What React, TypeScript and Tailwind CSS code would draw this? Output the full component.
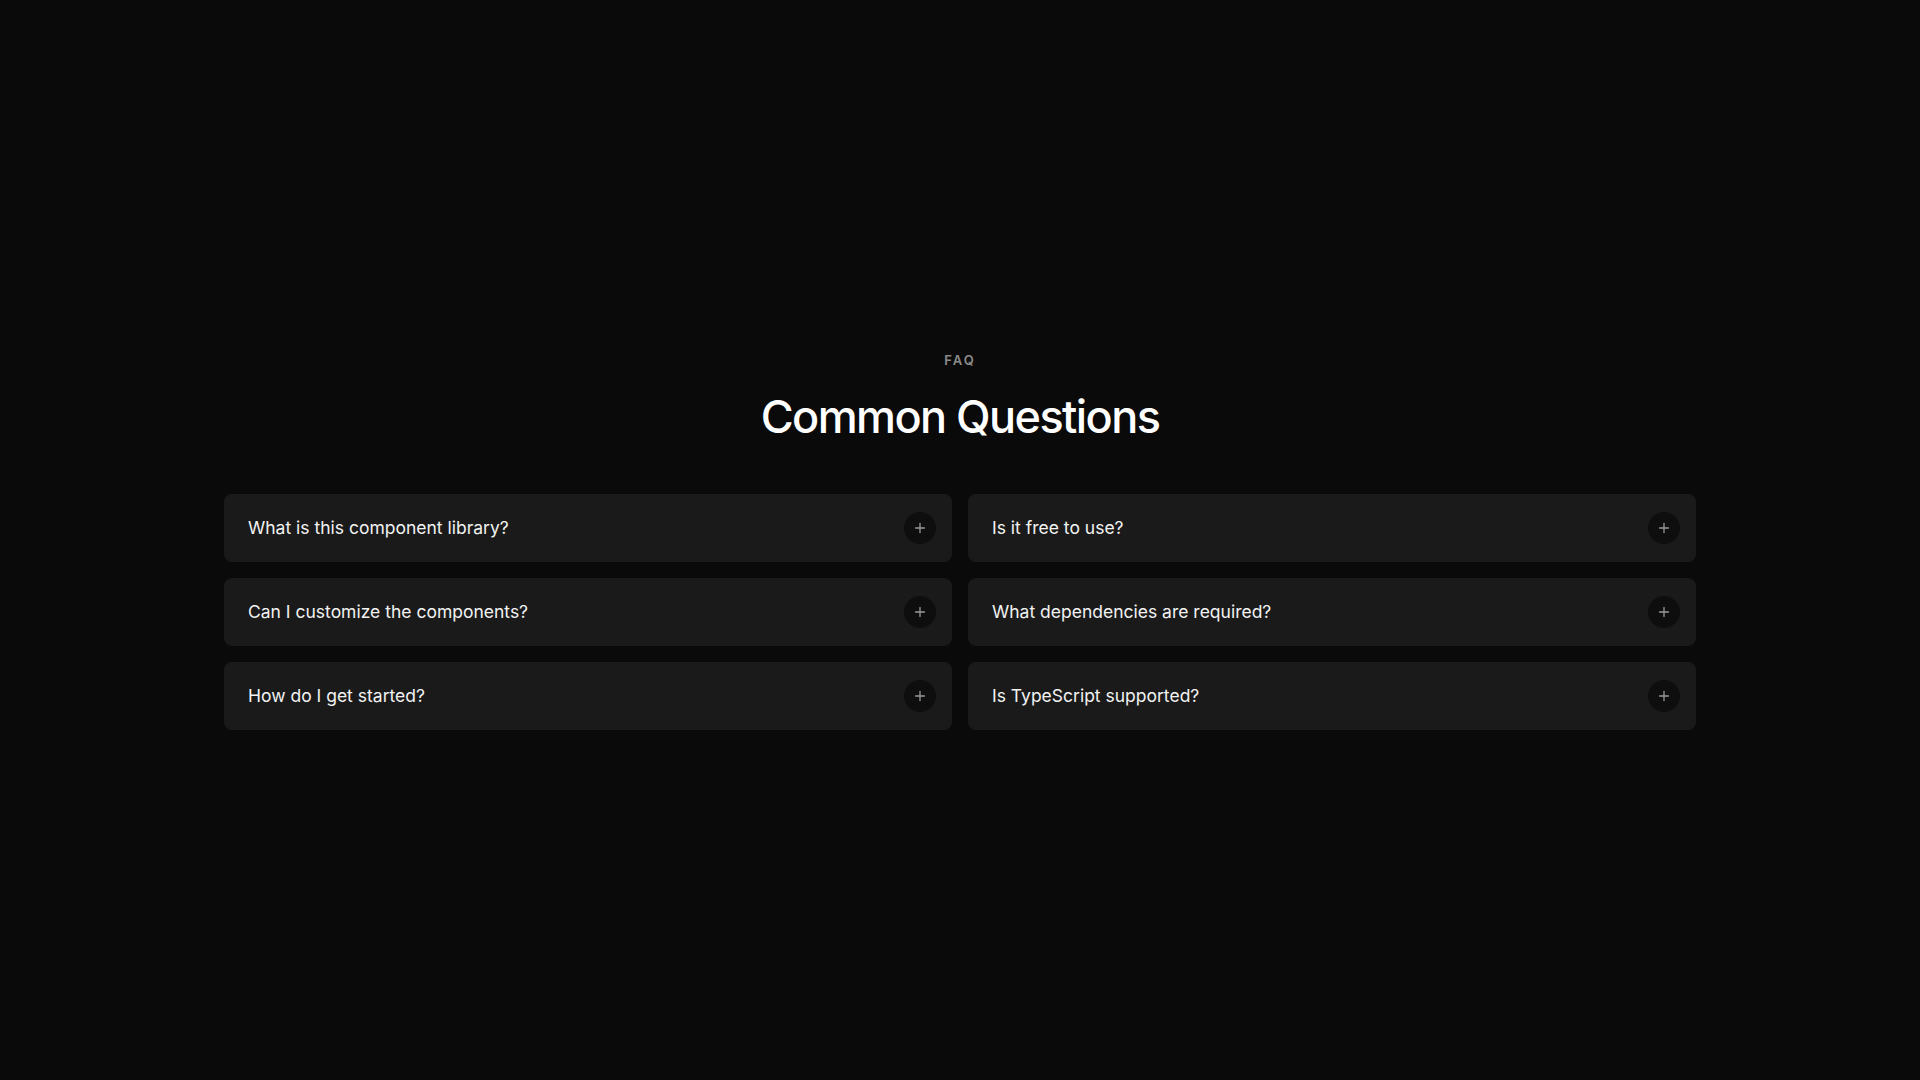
import React from "react";

const left = [
  "What is this component library?",
  "Can I customize the components?",
  "How do I get started?",
];
const right = [
  "Is it free to use?",
  "What dependencies are required?",
  "Is TypeScript supported?",
];

function Item({ q }: { q: string }) {
  return (
    <div className="flex h-[68px] items-center justify-between rounded-lg bg-[#1a1a1a] pl-6 pr-4">
      <span className="text-[17.5px] text-[#f2f2f2]">{q}</span>
      <span className="flex h-8 w-8 items-center justify-center rounded-full bg-[#0e0e0e]">
        <svg width="12" height="12" viewBox="0 0 12 12" fill="none">
          <path d="M6 1.5v9M1.5 6h9" stroke="#9a9a9a" strokeWidth="1.3" strokeLinecap="round" />
        </svg>
      </span>
    </div>
  );
}

export default function App() {
  return (
    <div
      className="flex min-h-screen w-full items-center justify-center bg-[#0a0a0a]"
      style={{ fontFamily: "Inter, 'Noto Sans', sans-serif" }}
    >
      <div className="flex w-[1472px] flex-col items-center">
        <div className="text-[13px] font-semibold leading-5 tracking-[0.15em] text-[#8a8a8a]">FAQ</div>
        <h2 className="mt-[19px] text-[45px] font-medium leading-[1.25] tracking-[-0.035em] text-white">
          Common Questions
        </h2>
        <div className="mt-12 grid w-full grid-cols-2 gap-4">
          <div className="flex flex-col gap-4">
            {left.map((q) => (
              <Item key={q} q={q} />
            ))}
          </div>
          <div className="flex flex-col gap-4">
            {right.map((q) => (
              <Item key={q} q={q} />
            ))}
          </div>
        </div>
      </div>
    </div>
  );
}
